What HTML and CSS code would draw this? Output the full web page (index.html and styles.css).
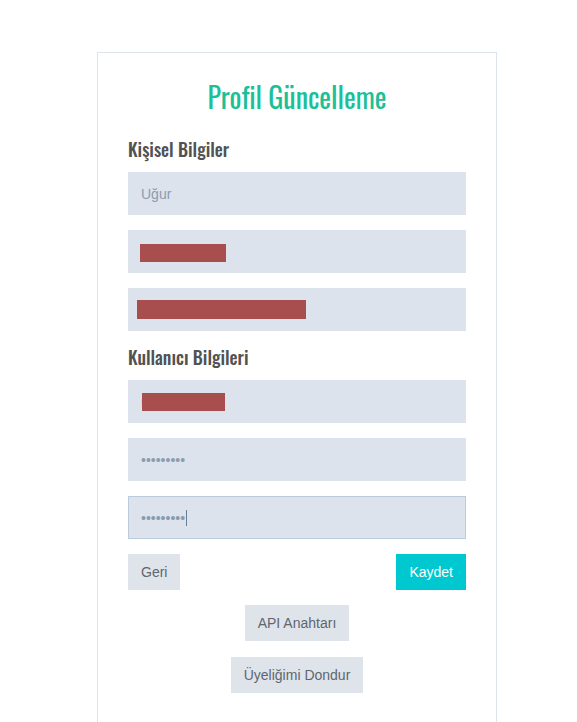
FILE: index.html
```html
<!DOCTYPE html>
<html lang="tr">
<head>
<meta charset="utf-8">
<title>Profil Güncelleme</title>
<link rel="stylesheet" href="styles.css">
</head>
<body>
<div class="card">
  <h1 class="title">Profil Güncelleme</h1>
  <form class="form">
    <h2 class="section">Kişisel Bilgiler</h2>
    <div class="field"><input class="input" type="text" placeholder="Uğur"></div>
    <div class="field"><input class="input" type="text"><span class="redact r1"></span></div>
    <div class="field"><input class="input" type="text"><span class="redact r2"></span></div>
    <h2 class="section">Kullanıcı Bilgileri</h2>
    <div class="field"><input class="input" type="text" placeholder="u"><span class="redact r3"></span></div>
    <div class="field"><input class="input" type="password" placeholder="•••••••••"></div>
    <div class="field"><div class="input focused"><span class="dots">•••••••••</span><span class="caret"></span></div></div>
    <div class="actions">
      <button type="button" class="btn">Geri</button>
      <button type="button" class="btn primary">Kaydet</button>
    </div>
    <div class="center"><button type="button" class="btn">API Anahtarı</button></div>
    <div class="center"><button type="button" class="btn">Üyeliğimi Dondur</button></div>
  </form>
</div>
</body>
</html>
```

FILE: styles.css
```css
html, body {
  margin: 0;
  padding: 0;
  background: #ffffff;
}
body {
  font-family: "Liberation Sans", Arial, sans-serif;
  height: 722px;
  overflow: hidden;
}
.card {
  box-sizing: border-box;
  width: 400px;
  margin: 52px 0 0 97px;
  border: 1px solid #dde4ec;
  padding: 21px 30px 30px;
  min-height: 670px;
}
.title {
  margin: 0 0 16px;
  text-align: center;
  font-family: "Oswald", "Liberation Sans Narrow", "DejaVu Sans Condensed", sans-serif;
  font-weight: 400;
  font-size: 28px;
  line-height: 46px;
  color: #1bbf98;
}
.form {
  display: flex;
  flex-direction: column;
}
.section {
  margin: 0 0 10px;
  font-family: "Oswald", "Liberation Sans Narrow", "DejaVu Sans Condensed", sans-serif;
  font-weight: 500;
  font-size: 18px;
  line-height: 26px;
  color: #525252;
}
.field {
  position: relative;
  margin-bottom: 15px;
}
.field + .section {
  margin-top: -2px;
}
.input {
  box-sizing: border-box;
  display: flex;
  align-items: center;
  width: 338px;
  height: 43px;
  padding: 0 12px;
  border: 1px solid #dce3ec;
  background: #dce3ec;
  font-family: "Liberation Sans", Arial, sans-serif;
  font-size: 14px;
  color: #8a9bb0;
  outline: none;
}
.input::placeholder {
  color: #8c9cb1;
  opacity: 1;
}
.focused {
  border-color: #bccadb;
}
.dots {
  color: #8a9bb0;
}
.caret {
  display: inline-block;
  width: 1px;
  height: 16px;
  margin-left: 1px;
  background: #6b7f96;
}
.redact {
  position: absolute;
  background: #a94e4e;
}
.r1 { left: 12px; top: 14px; width: 86px; height: 18px; }
.r2 { left: 9px; top: 12px; width: 169px; height: 19px; }
.r3 { left: 14px; top: 13px; width: 83px; height: 18px; }
.actions {
  display: flex;
  justify-content: space-between;
  margin-bottom: 15px;
}
.btn {
  height: 36px;
  padding: 0 13px;
  border: none;
  background: #dfe4ea;
  font-family: "Liberation Sans", Arial, sans-serif;
  font-size: 14px;
  color: #5e6670;
  cursor: pointer;
}
.primary {
  background: #00c8d0;
  color: #ffffff;
}
.center {
  display: flex;
  justify-content: center;
  margin-bottom: 16px;
}
```
